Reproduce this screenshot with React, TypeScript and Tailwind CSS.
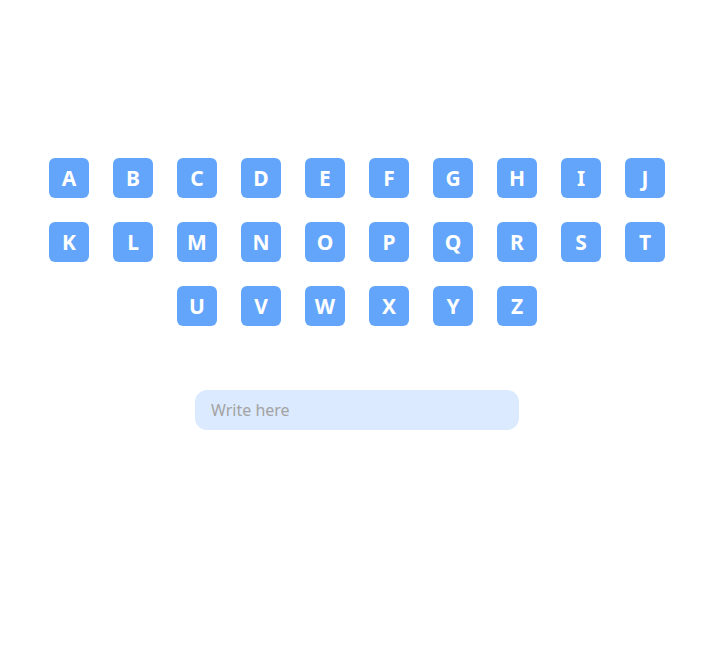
import React from "react";

const letters = "ABCDEFGHIJKLMNOPQRSTUVWXYZ".split("");

export default function App() {
  return (
    <div
      className="w-[714px] min-h-[659px] bg-white pt-[146px]"
      style={{ fontFamily: '"Noto Sans", "Open Sans", sans-serif' }}
    >
      <div className="w-[640px] mx-auto flex flex-wrap justify-center">
        {letters.map((l) => (
          <button
            key={l}
            className="m-3 w-10 h-10 rounded-md bg-[#63a5fa] text-white text-[21px] font-bold flex items-center justify-center leading-none"
          >
            {l}
          </button>
        ))}
      </div>
      <div className="mt-[52px] flex justify-center">
        <input
          type="text"
          placeholder="Write here"
          className="w-[324px] h-10 rounded-xl bg-[#dbeafe] px-4 text-base text-gray-700 placeholder:text-[#a3a3a3] outline-none"
        />
      </div>
    </div>
  );
}
